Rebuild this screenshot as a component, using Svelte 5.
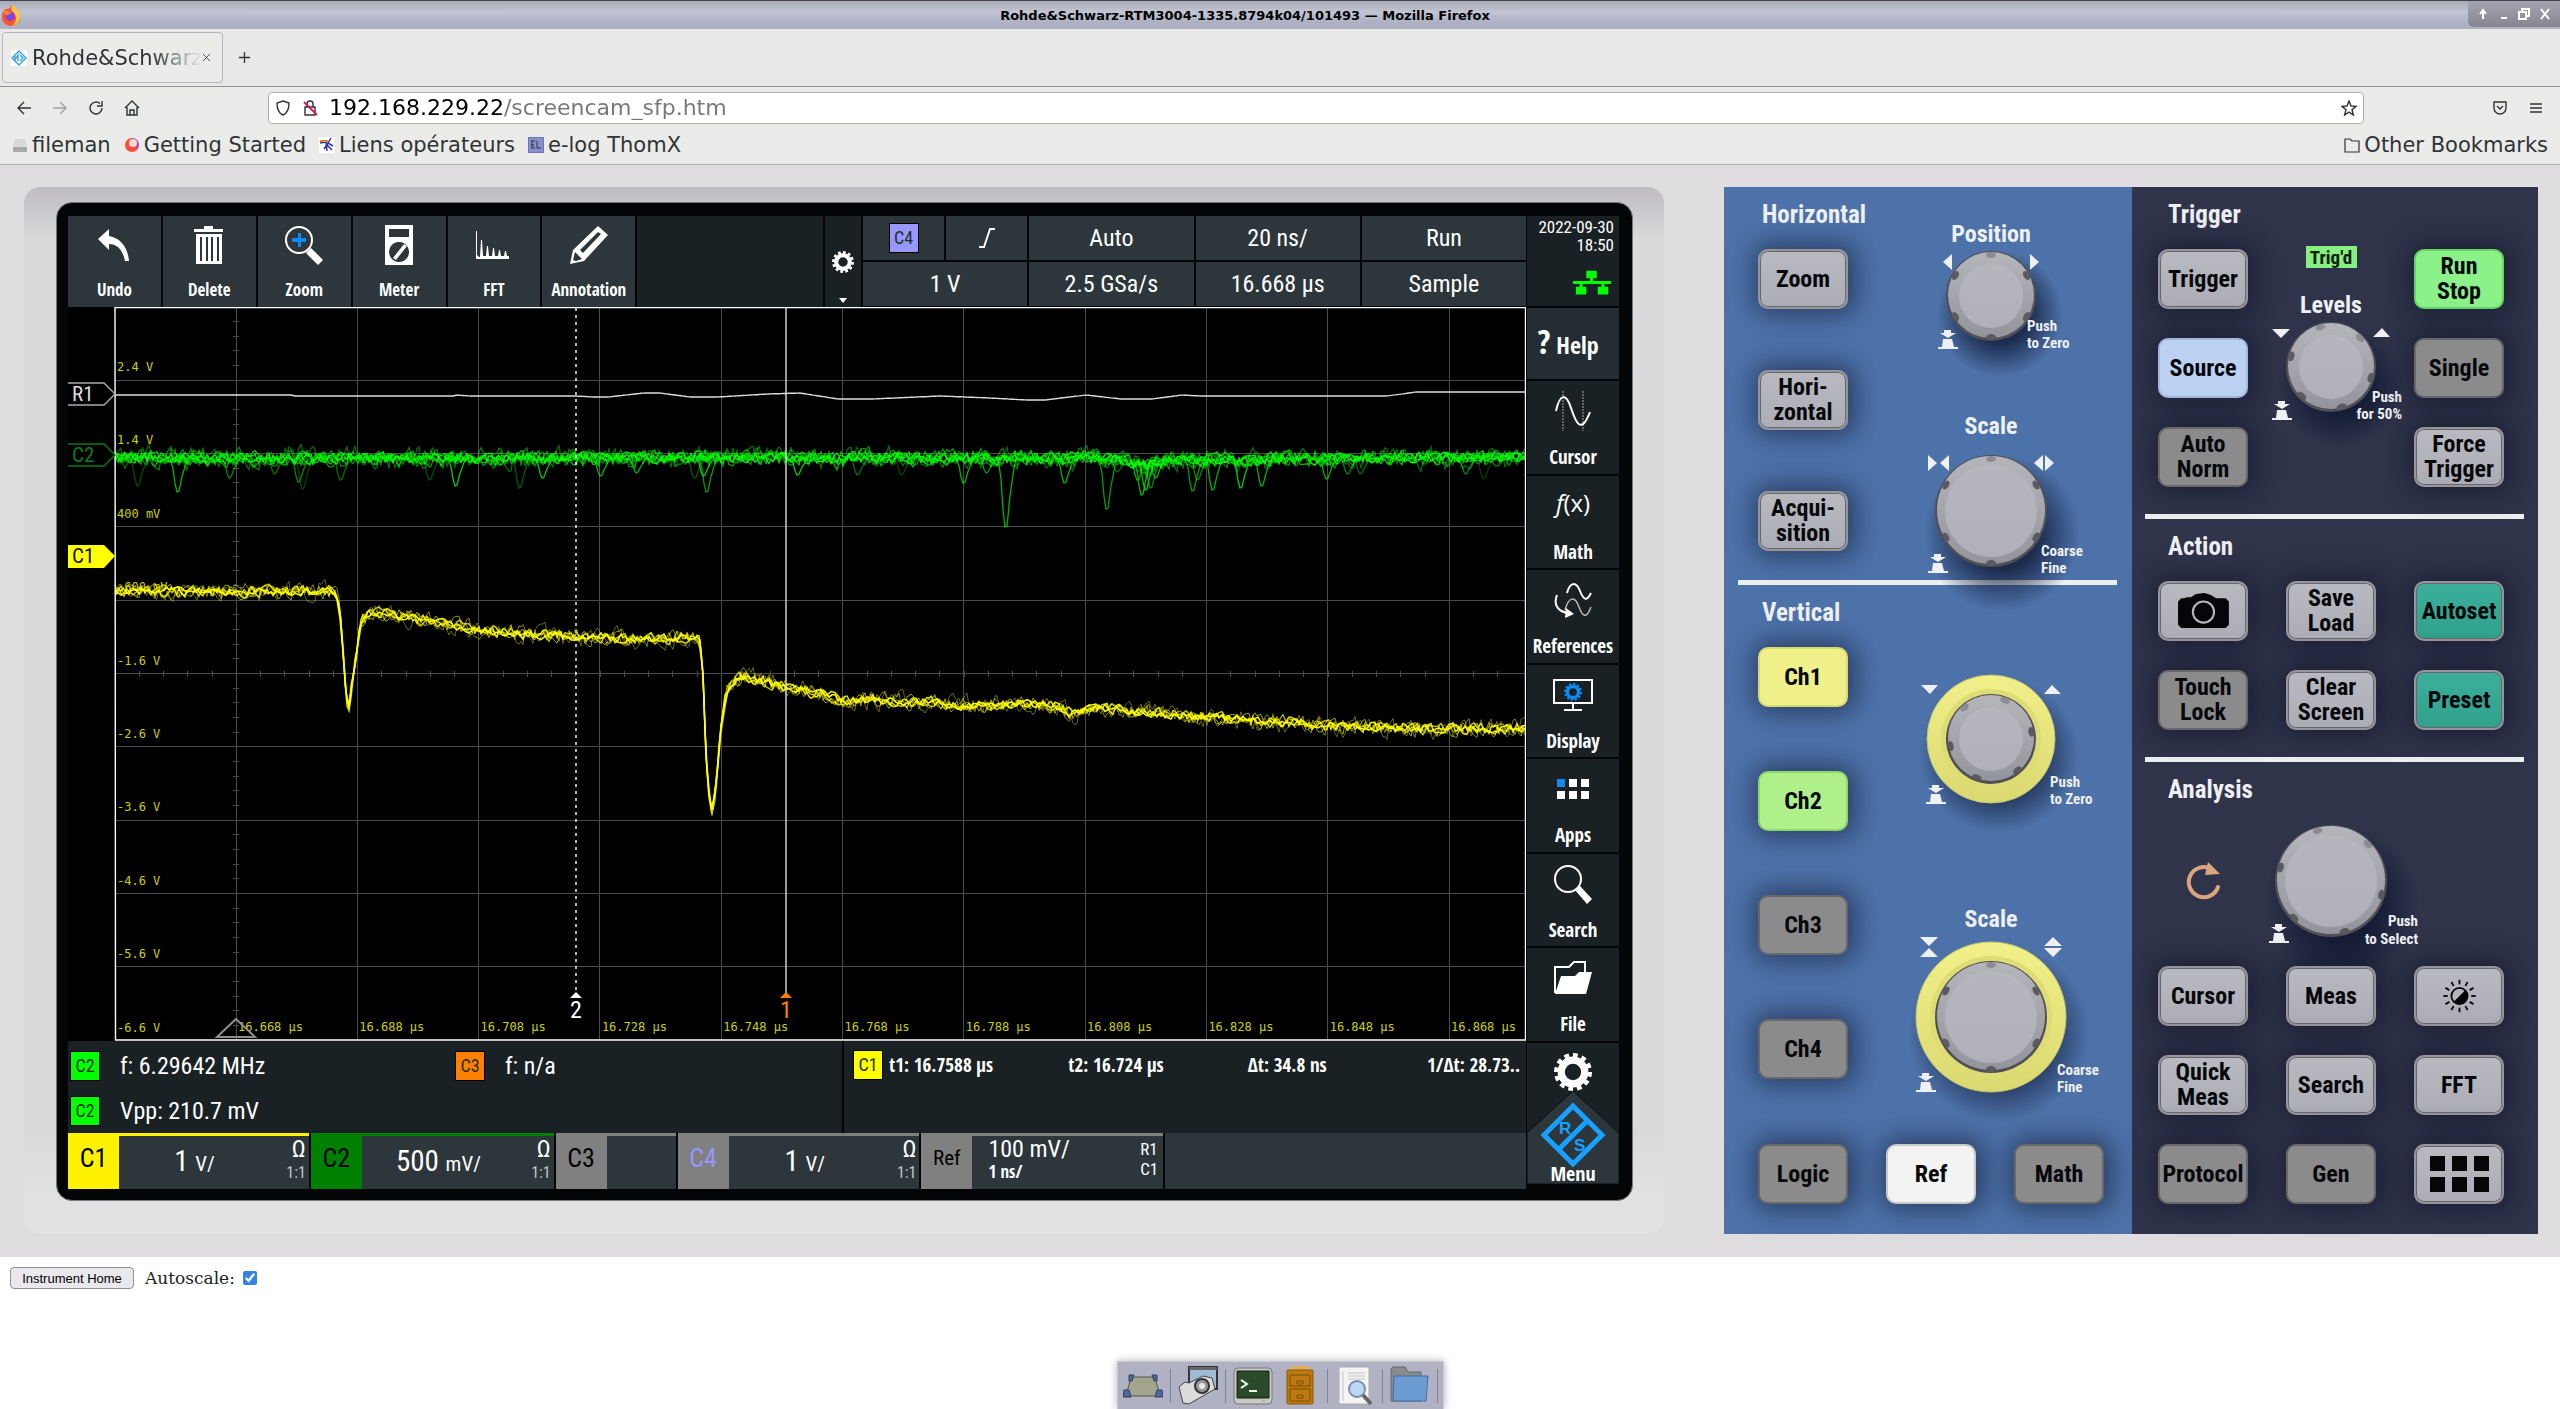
<script>
    let autoscale = true;
    let url = '192.168.229.22/screencam_sfp.htm';

    const bookmarks = [
        { name: 'fileman', icon: 'disk' },
        { name: 'Getting Started', icon: 'swirl' },
        { name: 'Liens opérateurs', icon: 'spark' },
        { name: 'e-log ThomX', icon: 'elog' }
    ];
    const tools = ['Undo', 'Delete', 'Zoom', 'Meter', 'FFT', 'Annotation'];
    const side = ['Cursor', 'Math', 'References', 'Display', 'Apps', 'Search', 'File'];
    const volts = ['2.4 V', '1.4 V', '400 mV', '-600 mV', '-1.6 V', '-2.6 V', '-3.6 V', '-4.6 V', '-5.6 V', '-6.6 V'];
    const cols = [0, 1, 2, 3, 4, 5, 6, 7, 8, 9, 10];

    // repeatable noise, so every reload draws the same waveform
    let seed = 7;
    function rnd() {
        seed = (seed * 16807) % 2147483647;
        return seed / 2147483647 - 0.5;
    }

    function at(keys, x) {
        for (let i = 1; i < keys.length; i++) {
            if (x <= keys[i][0]) {
                let [x0, y0] = keys[i - 1];
                let [x1, y1] = keys[i];
                return y0 + (y1 - y0) * (x - x0) / (x1 - x0);
            }
        }
        return keys[keys.length - 1][1];
    }

    function trace(keys, amp, step) {
        let pts = [];
        let n = 0;
        for (let x = 115; x <= 1526; x += step) {
            n = n * 0.4 + rnd() * amp;
            pts.push(x + ',' + (at(keys, x) + n).toFixed(1));
        }
        return pts.join(' ');
    }

    const c1 = [[115, 591], [335, 592], [338, 600], [341, 622], [345, 680], [348, 712], [354, 670], [360, 625], [366, 615],
        [374, 613], [400, 616], [448, 624], [484, 631], [525, 634], [576, 637], [652, 639], [693, 637], [700, 642],
        [703, 673], [706, 753], [708, 787], [712, 812], [716, 787], [721, 727], [726, 693], [731, 684], [741, 676],
        [754, 678], [785, 687], [820, 694], [842, 700], [930, 702], [963, 706], [1028, 703], [1061, 708], [1074, 716],
        [1089, 708], [1122, 710], [1204, 717], [1314, 725], [1396, 729], [1526, 728]];
    const r1 = [[115, 395], [292, 395], [294, 396], [454, 396], [456, 395], [470, 396], [576, 396], [593, 397], [608, 397],
        [644, 393], [660, 393], [690, 397], [718, 397], [768, 394], [800, 393], [838, 399], [872, 399], [940, 396],
        [990, 398], [1026, 400], [1045, 400], [1086, 395], [1121, 399], [1152, 399], [1182, 395], [1200, 396],
        [1386, 396], [1402, 394], [1416, 392], [1526, 392]];

    // [x, y of the tip, opacity]
    const dips = [[138, 486, 0.35], [178, 492, 0.8], [230, 478, 0.6], [275, 474, 0.5], [299, 482, 0.6], [303, 489, 0.3], [341, 480, 0.5],
        [430, 480, 0.35], [456, 486, 0.9], [520, 488, 0.4], [543, 478, 0.9], [601, 476, 0.8], [637, 473, 0.8], [695, 478, 0.4],
        [707, 492, 0.7], [704, 476, 0.9], [798, 475, 0.9], [858, 475, 0.5], [902, 475, 0.3], [964, 483, 0.8], [987, 473, 0.7],
        [1006, 527, 0.8], [1065, 483, 0.8], [1107, 509, 0.7], [1118, 472, 0.5], [1138, 480, 0.8], [1142, 495, 0.8], [1146, 490, 0.9], [1151, 488, 0.6],
        [1156, 478, 0.8], [1193, 491, 0.7], [1198, 480, 0.6], [1213, 490, 0.8], [1241, 488, 0.9], [1262, 486, 0.8], [1327, 479, 0.8], [1348, 474, 0.6],
        [1361, 474, 0.5], [1466, 474, 0.6], [1484, 479, 0.25]];
    const c2 = [[115, 458], [1100, 458], [1136, 463], [1144, 468], [1154, 463], [1180, 460], [1526, 457]];

    function dip(x, y) {
        let h = y - 458;
        return `M${x - 8} 459L${x - 5} ${458 + h * 0.3}L${x - 3} ${458 + h * 0.75}L${x - 1} ${y}L${x + 1} ${y - 1}L${x + 4} ${458 + h * 0.55}L${x + 8} ${458 + h * 0.15}L${x + 10} 459`;
    }

    const yellow = [trace(c1, 17, 2), trace(c1, 14, 2), trace(c1, 12, 2), trace(c1, 10, 3), trace(c1, 9, 2), trace(c1, 7, 3)];
    const green = [trace(c2, 19, 2), trace(c2, 16, 2), trace(c2, 14, 2), trace(c2, 12, 3), trace(c2, 11, 2), trace(c2, 9, 2), trace(c2, 8, 2)];
    const white = trace(r1, 0, 2);

    const channels = [
        { id: 'C1', cls: 'c1', value: '1', unit: 'V/', ohm: true },
        { id: 'C2', cls: 'c2', value: '500', unit: 'mV/', ohm: true },
        { id: 'C3', cls: 'c3' },
        { id: 'C4', cls: 'c4', value: '1', unit: 'V/', ohm: true }
    ];
</script>

{#snippet gear(cx, cy, r)}
    <circle {cx} {cy} r={r * 0.62} fill="none" stroke="currentColor" stroke-width={r * 0.38} />
    <circle {cx} {cy} r={r * 0.87} fill="none" stroke="currentColor" stroke-width={r * 0.26}
        pathLength="120" stroke-dasharray="5.4 4.6" />
{/snippet}

{#snippet face(cx, cy, r, turn)}
    <circle {cx} {cy} {r} fill="#505056" />
    <circle {cx} cy={cy - 1} r={r - 2} fill="url(#rim)" />
    {#each [0, 60, 120, 180, 240, 300] as a}
        <ellipse {cx} cy={cy - r + 4} rx="5" ry="3" transform="rotate({a + turn} {cx} {cy})" fill={a + turn < 50 || a + turn > 310 ? '#8b8b91' : '#5a5a60'} />
    {/each}
    <circle {cx} {cy} r={r > 50 ? r - 10 : r - 13} fill="url(#cap)" />
{/snippet}

{#snippet knob(cx, cy, r, turn)}
    <ellipse cx={cx + r * 0.2} cy={cy + r * 0.4} rx={r * 1.4} ry={r * 1.4} fill="url(#shade)" />
    {@render face(cx, cy, r, turn)}
{/snippet}

{#snippet ringed(cx, cy, big, r, turn)}
    <ellipse cx={cx + 8} cy={cy + 16} rx={big + 16} ry={big + 14} fill="url(#shade)" />
    <circle {cx} {cy} r={big} fill="url(#ring)" stroke="#c5c46b" />
    <circle {cx} {cy} r={r + 5} fill="#dddc75" />
    {@render face(cx, cy, r, turn)}
{/snippet}

{#snippet push(x, y)}
    <path transform="translate({x} {y})" fill="#eef0f2" d="M6 0h7v3h5L10 8 2 3h4zM5 9h9l2 8h4v2H0v-2h4z" />
{/snippet}

{#snippet key(label, tone)}
    <button class="key {tone}"><span>{label}</span></button>
{/snippet}

<div class="page">
    <header class="titlebar">
        <svg class="fox" viewBox="0 0 22 24">
            <path d="M11 2c2 2 8 5 9 10 1 7-4 11-9 11S1 19 2 12c0-3 2-5 4-6 2 0 4 0 5-4z" fill="#f9572d" />
            <path d="M12 1c0 3 8 5 8 12 0 6-4 9-8 10 5-4 6-10 0-14-1-3-1-6 0-8z" fill="#ffc83c" />
            <circle cx="10" cy="13" r="5" fill="#8a3fe0" />
            <path d="M3 9c3-2 6-1 9 1-3 0-3 3-6 2z" fill="#ff8a1f" />
        </svg>
        <h1>Rohde&amp;Schwarz-RTM3004-1335.8794k04/101493 — Mozilla Firefox</h1>
        <div class="winbtns">
            <button aria-label="Shade"><svg viewBox="0 0 12 12"><path d="M6 11V3M3 6l3-4 3 4" /></svg></button>
            <button aria-label="Minimise"><svg viewBox="0 0 12 12"><path d="M3 10h6" /></svg></button>
            <button aria-label="Restore"><svg viewBox="0 0 12 12"><path d="M4 3V1h7v7H9M1 4h7v7H1z" /></svg></button>
            <button aria-label="Close"><svg viewBox="0 0 12 12"><path d="M2 1l8 10M10 1L2 11" /></svg></button>
        </div>
    </header>

    <div class="tabs">
        <div class="tab">
            <svg class="i16" viewBox="0 0 16 16"><path fill="#fff" d="M0 0h16v16H0z" /><path d="M8 1l7 7-7 7-7-7zM4 6v4l3-5v6M9 5l3 3-3 3" fill="none" stroke="#2aa0e8" stroke-width="1.3" /></svg>
            <span>Rohde&amp;Schwarz</span>
            <button aria-label="Close tab"><svg viewBox="0 0 10 10"><path d="M1 1l8 8M9 1L1 9" fill="none" stroke="#3c4043" /></svg></button>
        </div>
        <button class="plus" aria-label="New tab"><svg viewBox="0 0 14 14"><path d="M7 1v12M1 7h12" fill="none" stroke="#2e3436" stroke-width="1.4" /></svg></button>
    </div>

    <nav class="navbar">
        <button aria-label="Back"><svg viewBox="0 0 16 16"><path d="M15 8H2M8 2L2 8l6 6" /></svg></button>
        <button class="dim" aria-label="Forward"><svg viewBox="0 0 16 16"><path d="M1 8h13M8 2l6 6-6 6" /></svg></button>
        <button aria-label="Reload"><svg viewBox="0 0 16 16"><path d="M14 8a6 6 0 1 1-2-4.500M14 1v5H9" /></svg></button>
        <button aria-label="Home"><svg viewBox="0 0 16 16"><path d="M1 8l7-7 7 7M3 7v8h10V7M6 15v-5h4v5" /></svg></button>
        <div class="urlbar">
            <svg viewBox="0 0 16 16"><path d="M8 1l6 2c0 6-1 10-6 12C3 13 2 9 2 3z" /></svg>
            <svg viewBox="0 0 16 16"><path d="M3 7h10v8H3zM5 7V4a3 3 0 0 1 6 0v3" /><path d="M2 2l13 13" stroke="#e3174b" stroke-width="1.8" /></svg>
            <input aria-label="Address" bind:value={url}>
            <svg class="star" viewBox="0 0 16 16"><path d="M8 1l2 5 5 .4-4 3.400L12.400 15 8 12.200 3.600 15 5 9.800 1 6.400 6 6z" /></svg>
        </div>
        <button class="pocket" aria-label="Pocket"><svg viewBox="0 0 16 16"><path d="M2 2h12v6a6 6 0 0 1-12 0zM5 6l3 3 3-3" /></svg></button>
        <button aria-label="Menu"><svg viewBox="0 0 16 16"><path d="M2 4h12M2 8h12M2 12h12" /></svg></button>
    </nav>

    <div class="bookmarks">
        {#each bookmarks as b}
            <a href="#{b.icon}">
                <svg class="i16" viewBox="0 0 16 16">
                    {#if b.icon === 'disk'}
                        <path d="M3 2h10l2 8H1z" fill="#d8d8d8" /><rect x="1" y="10" width="14" height="5" rx="1" fill="#a9a9a9" /><path d="M11 12h3" stroke="#6c6" />
                    {:else if b.icon === 'swirl'}
                        <circle cx="8" cy="8" r="7" fill="#fb4a3e" /><path d="M8 1a7 7 0 0 1 7 7l-3 4z" fill="#a64be8" /><circle cx="9" cy="6" r="4" fill="#f6dcc6" />
                    {:else if b.icon === 'spark'}
                        <path fill="#fff" d="M0 0h16v16H0z" /><path d="M1 6l6-1 1 9M12 1L8 8l5 5M5 12l4-6 5 3" fill="none" stroke="#2a34b8" stroke-width="1.5" /><path d="M1 4h8" stroke="#e8842c" stroke-width="2" />
                    {:else}
                        <path fill="#8890cc" stroke="#5560a8" d="M0 0h16v16H0z" /><path d="M3 4h4M3 8h3M3 11h4M4 4v7M9 4v7h4" stroke="#334" fill="none" />
                    {/if}
                </svg>{b.name}
            </a>
        {/each}
        <a class="other" href="#other"><svg class="i16" viewBox="0 0 16 16"><path d="M1 2h5l2 2h7v11H1z" fill="none" stroke="#2e3436" stroke-width="1.2" /></svg>Other Bookmarks</a>
    </div>

    <main class="stage">
        <div class="housing">
            <div class="bezel">
                <div class="left">
                    <div class="topbar">
                        <div class="tools">
                            {#each tools as t}
                                <button class="tool">
                                    <svg viewBox="0 0 40 40" fill="#fff">
                                        {#if t === 'Undo'}
                                            <path d="M4 14L15 4v7c12 2 19 12 20 25h-4c-2-10-7-17-16-17v6z" />
                                        {:else if t === 'Delete'}
                                            <path d="M5 4h10V1h9v3h10v3H5zM7 9h26v30H7zM11 12v24h2V12zM17 12v24h2V12zM22 12v24h2V12zM28 12v24h2V12z" fill-rule="evenodd" />
                                        {:else if t === 'Zoom'}
                                            <circle cx="15" cy="15" r="13" fill="none" stroke="#fff" stroke-width="2" /><path d="M8 13h6V8h3v5h5v4h-5v5h-3v-5H8z" fill="#0c8bf2" /><path d="M22 28l5-5 12 12-5 5z" />
                                        {:else if t === 'Meter'}
                                            <path d="M6 0h28v40H6zM10 4v8h20V4zM20 17a10 10 0 1 0 .1 0z" fill-rule="evenodd" /><path d="M14 33l11-14 3 2-11 14z" />
                                        {:else if t === 'FFT'}
                                            <path d="M2 34V6h1v24l2 2h1l1-17h1l1 16h3l1-10h1l1 10h3l1-8h1l1 8h3l1-6h1l1 6h3l1-5h1l1 5h2v3z" />
                                        {:else}
                                            <path d="M1 39l3-14L29 1l10 9-24 26zM6 27l-2 8 3 1 6-2zM11 25l3 3 18-19-3-2z" fill-rule="evenodd" />
                                        {/if}
                                    </svg>
                                    <span>{t}</span>
                                </button>
                            {/each}
                            <div class="blank"></div>
                        </div>
                        <button class="setup" aria-label="Setup">
                            <svg viewBox="0 0 36 90">{@render gear(18, 45, 11)}<path d="M14 81h8l-4 5z" fill="#fff" /></svg>
                        </button>
                        <div class="status">
                            <button class="half"><i class="badge c4b">C4</i></button>
                            <button class="half" aria-label="Slope"><svg viewBox="0 0 18 20"><path d="M1 19h5L12 1h5" fill="none" stroke="#fff" stroke-width="2" /></svg></button>
                            <button>Auto</button>
                            <button>20 ns/</button>
                            <button>Run</button>
                            <button>1 V</button>
                            <button>2.5 GSa/s</button>
                            <button>16.668 µs</button>
                            <button>Sample</button>
                        </div>
                    </div>

                    <svg class="plot" viewBox="68 307 1458 734">
                        <g stroke="#4b4b4b" shape-rendering="crispEdges">
                            {#each cols as c}
                                <path d="M{236 + c * 121.3} 307V1040" />
                            {/each}
                            {#each volts as v, i}
                                <path d="M115 {307 + i * 73.3}H1526" />
                            {/each}
                            {#each Array(50) as _, i}
                                <path d="M233 {307 + i * 14.66}h6" />
                            {/each}
                            {#each Array(58) as _, i}
                                <path d="M{115 + i * 24.26} 671v6" />
                            {/each}
                        </g>
                        <g class="axis">
                            {#each volts as v, i}
                                <text x="117" y={371 + i * 73.4}>{v}</text>
                            {/each}
                            {#each cols as c}
                                <text x={238 + c * 121.3} y="1031">{(16.668 + c * 0.02).toFixed(3)} µs</text>
                            {/each}
                        </g>
                        <path d="M236 1019l19 18h-38z" fill="none" stroke="#8c8c8c" stroke-width="2" />
                        <polyline points={white} fill="none" stroke="#ddd" stroke-width="1.4" />
                        {#each dips as d}
                            <path d={dip(d[0], d[1])} fill="none" stroke="#00e000" stroke-width="1.3" opacity={d[2]} />
                        {/each}
                        {#each green as g, i}
                            <polyline points={g} fill="none" stroke="#00ff00" opacity={0.45 + i * 0.09} stroke-width="1.2" />
                        {/each}
                        {#each yellow as y, i}
                            <polyline points={y} fill="none" stroke="#ffff00" opacity={0.4 + i * 0.12} stroke-width={i > 2 ? 1.5 : 1} />
                        {/each}
                        <path d="M576 308V993" stroke="#fff" stroke-dasharray="3 4" stroke-width="1.4" />
                        <path d="M786 308V993" stroke="#ddd" stroke-width="1.4" />
                        <path d="M576 992l6 6h-12z" fill="#fff" />
                        <path d="M786 992l6 6h-12z" fill="#ff8000" />
                        <text class="cur" x="576" y="1018" fill="#fff">2</text>
                        <text class="cur" x="786" y="1018" fill="#ff8000">1</text>
                        <path d="M115 307.500H1525.500V1040H115.500z" fill="none" stroke="#fff" stroke-width="1.4" />
                        <g stroke-width="1.4">
                            <path d="M68 383h36l11 11-11 11H68" fill="#000" stroke="#aaa" />
                            <path d="M68 444h36l11 11-11 11H68" fill="#000" stroke="#087a14" />
                            <path d="M68 545h36l11 11-11 12H68z" fill="#ff0" />
                        </g>
                        <g class="tags">
                            <text x="72" y="401" fill="#ddd">R1</text>
                            <text x="72" y="462" fill="#0a7d17">C2</text>
                            <text x="72" y="563" fill="#111">C1</text>
                        </g>
                    </svg>

                    <div class="measure">
                        <div class="values">
                            <div><i class="badge c2b">C2</i>f: 6.29642 MHz</div>
                            <div><i class="badge c3b">C3</i>f: n/a</div>
                            <div><i class="badge c2b">C2</i>Vpp: 210.7 mV</div>
                        </div>
                        <div class="cursors">
                            <i class="badge c1b">C1</i>
                            <span>t1: 16.7588 µs</span>
                            <span>t2: 16.724 µs</span>
                            <span>Δt: 34.8 ns</span>
                            <span>1/Δt: 28.73..</span>
                        </div>
                    </div>

                    <div class="channels">
                        {#each channels as ch}
                            <button class="ch {ch.cls}">
                                <b>{ch.id}</b>
                                <span class="val">{#if ch.value}{ch.value} <small>{ch.unit}</small>{/if}</span>
                                {#if ch.ohm}<span class="imp">Ω<small>1:1</small></span>{/if}
                            </button>
                        {/each}
                        <button class="ch ref">
                            <b>Ref</b>
                            <span class="two">100 mV/<small>1 ns/</small></span>
                            <span class="src">R1<br>C1</span>
                        </button>
                        <div class="ch empty"></div>
                    </div>
                </div>

                <div class="side">
                    <div class="date">2022-09-30<br>18:50
                        <svg viewBox="0 0 40 26" fill="#0f0"><path d="M14 0h11v8h-4v3h19v3h-7v3h4v8H26v-8h4v-3H10v3h4v8H3v-8h4v-3H0v-3h18V8h-4z" /></svg>
                    </div>
                    <button class="help"><em>?</em> Help</button>
                    {#each side as s}
                        <button class="item">
                            <svg viewBox="0 0 40 40" fill="none" stroke="#fff" stroke-width="2">
                                {#if s === 'Cursor'}
                                    <path d="M10 0v40M30 0v40" stroke-width="1" stroke-dasharray="2 1" stroke="#aaa" /><path d="M3 20C7 2 13 2 18 17S28 44 37 21" />
                                {:else if s === 'Math'}
                                    <text class="fx" x="20" y="26" text-anchor="middle" fill="#fff" stroke="none"><tspan font-style="italic">f</tspan>(x)</text>
                                {:else if s === 'References'}
                                    <path d="M14 13C17 2 23 1 27 11S34 21 38 13" /><path d="M12 30C16 16 22 16 26 27S34 38 38 27" stroke-width="1.5" stroke="#bbb" /><path d="M4 15c-4 10 1 17 12 18" /><path d="M13 28l8 6-9 4z" fill="#fff" stroke="none" />
                                {:else if s === 'Display'}
                                    <path d="M1 5h38v23H1zM20 28v6M11 35h18" /><g color="#0c8bf2">{@render gear(20, 17, 9)}</g>
                                {:else if s === 'Apps'}
                                    <g fill="#fff" stroke="none"><path fill="#0c8bf2" d="M4 10h8v8H4z" /><path d="M16 10h8v8h-8zM28 10h8v8h-8zM4 22h8v8H4zM16 22h8v8h-8zM28 22h8v8h-8z" /></g>
                                {:else if s === 'Search'}
                                    <circle cx="15" cy="15" r="13" /><path d="M22 26l5-4 12 13-5 5z" fill="#fff" stroke="none" />
                                {:else}
                                    <path d="M2 35V9h14l5-5h11v11" /><path d="M2 36l6-18h14l4-4h13l-6 22z" fill="#fff" stroke="none" />
                                {/if}
                            </svg>
                            <span>{s}</span>
                        </button>
                    {/each}
                    <button class="rs">
                        <svg viewBox="0 0 92 141">
                            {@render gear(46, 29, 19)}
                            <path d="M46 48L92 90V141H0V90z" fill="#2c363b" stroke="#0b0f10" />
                            <path d="M46 63L75 92 46 121 17 92zM62 76L30 108" fill="none" stroke="#18a0ff" stroke-width="5" />
                            <text x="32" y="91" fill="#18a0ff">R</text>
                            <text x="47" y="108" fill="#18a0ff">S</text>
                        </svg>
                        <span>Menu</span>
                    </button>
                </div>
            </div>
        </div>

        <div class="panel">
            <section class="blue">
                <div class="group">
                    <div class="keys">
                        <h2>Horizontal</h2>
                        {@render key('Zoom', 'grey')}
                        {@render key('Hori-\nzontal', 'grey')}
                        {@render key('Acqui-\nsition', 'grey')}
                    </div>
                    <svg class="dial" viewBox="0 -1 237 365">
                        <defs>
                            <radialGradient id="shade"><stop offset="0.45" stop-color="#0c1430" stop-opacity="0.75" /><stop offset="1" stop-color="#0c1430" stop-opacity="0" /></radialGradient>
                            <linearGradient id="rim" x1="0" y1="0" x2="0" y2="1"><stop offset="0" stop-color="#b5b6bb" /><stop offset="1" stop-color="#94949c" /></linearGradient>
                            <linearGradient id="cap" x1="0" y1="0" x2="0" y2="1"><stop offset="0" stop-color="#b6b7bd" /><stop offset="1" stop-color="#b0b0ba" /></linearGradient>
                            <linearGradient id="ring" x1="0" y1="0" x2="0" y2="1"><stop offset="0" stop-color="#f1f08a" /><stop offset="1" stop-color="#dad971" /></linearGradient>
                        </defs>
                        {@render knob(111, 108, 45, 0)}
                        {@render knob(111, 323, 56, 0)}
                        <path d="M63 74l9-8v16zM159 74l-9-8v16zM48 267l9 8-9 8zM69 267l-9 8 9 8zM163 267v16l-9-8zM165 267v16l9-8z" fill="#eef0f2" />
                        {@render push(58, 142)}
                        {@render push(48, 366)}
                        <text class="name" x="111" y="54">Position</text>
                        <text class="name" x="111" y="246">Scale</text>
                        <text class="hint" x="147" y="143">Push<tspan x="147" y="160">to Zero</tspan></text>
                        <text class="hint" x="161" y="368">Coarse<tspan x="161" y="385">Fine</tspan></text>
                    </svg>
                </div>
                <hr>
                <div class="group">
                    <div class="keys wide">
                        <h2>Vertical</h2>
                        {@render key('Ch1', 'yellow')}
                        {@render key('Ch2', 'lime')}
                        {@render key('Ch3', 'dark')}
                        {@render key('Ch4', 'dark')}
                    </div>
                    <svg class="dial" viewBox="0 0 237 494">
                        {@render ringed(111, 154, 64, 45, 20)}
                        {@render ringed(111, 432, 75, 56, 0)}
                        <path d="M41 100h17l-8 9zM164 109h17l-9-9zM40 352h18l-9 9zM40 372h18l-9-9zM164 361h18l-9-9zM164 363h18l-9 9z" fill="#eef0f2" />
                        {@render push(46, 200)}
                        {@render push(36, 488)}
                        <text class="name" x="111" y="342">Scale</text>
                        <text class="hint" x="170" y="202">Push<tspan x="170" y="219">to Zero</tspan></text>
                        <text class="hint" x="177" y="490">Coarse<tspan x="177" y="507">Fine</tspan></text>
                    </svg>
                </div>
                <div class="pad last">
                    {@render key('Logic', 'dark')}
                    {@render key('Ref', 'white')}
                    {@render key('Math', 'dark')}
                </div>
            </section>

            <section class="navy">
                <h2>Trigger</h2>
                <div class="pad">
                    {@render key('Trigger', 'grey')}
                    <svg class="dial mid" viewBox="0 0 90 238">
                        {@render knob(45, 118, 45, -15)}
                        <path d="M20-3h51v22H20z" fill="#87ee80" />
                        <text class="trigd" x="45" y="15">Trig'd</text>
                        <text class="name" x="45" y="64">Levels</text>
                        <path d="M-14 80H4l-9 9zM87 88h17l-8-9z" fill="#eef0f2" />
                        {@render push(-14, 152)}
                        <text class="hint end" x="116" y="153">Push<tspan x="116" y="170">for 50%</tspan></text>
                    </svg>
                    {@render key('Run\nStop', 'run')}
                    {@render key('Source', 'sky')}
                    {@render key('Single', 'dark')}
                    {@render key('Auto\nNorm', 'dark')}
                    {@render key('Force\nTrigger', 'grey')}
                </div>
                <hr>
                <h2>Action</h2>
                <div class="pad">
                    <button class="key grey" aria-label="Screenshot">
                        <svg viewBox="0 0 50 34"><path d="M4 5h3l2-1h4l5-3 8-1 6 2 5 3h9l3 3v22l-3 3H4l-3-3V8z" fill="#050608" /><circle cx="25" cy="18" r="10" fill="none" stroke="#b5b5bd" stroke-width="2" /></svg>
                    </button>
                    {@render key('Save\nLoad', 'grey')}
                    {@render key('Autoset', 'teal')}
                    {@render key('Touch\nLock', 'dark')}
                    {@render key('Clear\nScreen', 'grey')}
                    {@render key('Preset', 'teal')}
                </div>
                <hr>
                <h2>Analysis</h2>
                <svg class="dial turn" viewBox="0 2 346 162">
                    {@render knob(173, 79, 56, -15)}
                    <path d="M53 67A15 15 0 1 0 60 85" fill="none" stroke="#dba67c" stroke-width="4" stroke-linecap="round" />
                    <path d="M50 60l12 12-15 1z" fill="#dba67c" />
                    {@render push(111, 122)}
                    <text class="hint end" x="260" y="124">Push<tspan x="260" y="142">to Select</tspan></text>
                </svg>
                <div class="pad">
                    {@render key('Cursor', 'grey')}
                    {@render key('Meas', 'grey')}
                    <button class="key grey" aria-label="Intensity">
                        <svg viewBox="0 0 50 40">
                            <circle cx="25" cy="20" r="9" fill="#b5b5bd" stroke="#050608" stroke-width="2" /><path d="M18 27L32 13A10 10 0 0 1 18 27z" fill="#050608" />
                            {#each Array(12) as _, i}<path d="M25 2v5" transform="rotate({i * 30} 25 20)" stroke="#050608" stroke-width="2" />{/each}
                        </svg>
                    </button>
                    {@render key('Quick\nMeas', 'grey')}
                    {@render key('Search', 'grey')}
                    {@render key('FFT', 'grey')}
                    {@render key('Protocol', 'dark')}
                    {@render key('Gen', 'dark')}
                    <button class="key grey" aria-label="Apps">
                        <svg viewBox="0 0 60 36"><path d="M1 0h15v15H1zM23 0h15v15H23zM45 0h15v15H45zM1 21h15v15H1zM23 21h15v15H23zM45 21h15v15H45z" fill="#050608" /></svg>
                    </button>
                </div>
            </section>
        </div>
    </main>

    <div class="controls">
        <button>Instrument Home</button>
        <label>Autoscale: <input type="checkbox" bind:checked={autoscale}></label>
    </div>

    <footer class="dock">
        <button aria-label="Show desktop"><svg viewBox="0 0 40 40"><path d="M8 11h24l5 19H3z" fill="#a3a48d" stroke="#55564a" /><path d="M6 9h5l-2 6H6zM29 9h5v6h-3zM1 24h5l2 7H0zM34 24h5l1 7h-8z" fill="#4d689b" stroke="#2f4168" /></svg></button>
        <i></i>
        <button aria-label="Screenshot"><svg viewBox="0 0 40 40"><path d="M11 1h28v22H11z" fill="#9dbad8" stroke="#333" stroke-width="2" /><path d="M11 1h28v3H11z" fill="#666" /><path d="M1 21l6-5 4 1 14-7 9 2 3 11-26 15-6-1z" fill="#dcdcdc" stroke="#444" /><circle cx="24" cy="20" r="7" fill="#999" stroke="#333" stroke-width="2" /><circle cx="24" cy="20" r="3" fill="#e8e8e8" /></svg></button>
        <i></i>
        <button aria-label="Terminal"><svg viewBox="0 0 40 40"><rect x="1" y="2" width="38" height="36" rx="4" fill="#c9cac4" stroke="#777" /><path d="M4 5h32v27H4z" fill="#2c4a2a" stroke="#122010" /><path d="M8 14l6 4-6 4M16 25h8" fill="none" stroke="#e9ffe6" stroke-width="2" /><path d="M29 35h3" stroke="#6c3" /></svg></button>
        <button aria-label="Files"><svg viewBox="0 0 40 40"><path d="M9 3l3-3h16l3 3z" fill="#e4ad52" /><rect x="7" y="4" width="26" height="34" rx="1" fill="#bd7a10" stroke="#8b5706" /><path d="M10 9h20v11H10zM10 23h20v12H10zM17 15h6v3h-6zM17 29h6v3h-6z" fill="none" stroke="#7c4c04" /></svg></button>
        <i></i>
        <button aria-label="Find files"><svg viewBox="0 0 40 40"><path d="M4 1h30v37H4z" fill="#f4f4f2" stroke="#aaa" /><path d="M13 7h17M13 10h17M13 13h17M8 5v30" stroke="#c4c4c4" /><circle cx="22" cy="23" r="8" fill="#bcd7f2" stroke="#7a8ea8" stroke-width="2" /><path d="M28 29l8 9" stroke="#666" stroke-width="4" /></svg></button>
        <i></i>
        <button aria-label="Folder"><svg viewBox="0 0 40 40"><path d="M1 3l2-2h12l3 5h13v29H1z" fill="#8a8b8e" stroke="#666" /><path d="M4 10h34l-2 25H3z" fill="#6d9cd3" stroke="#3d6ba8" /></svg></button>
        <i></i>
    </footer>
</div>

<style>
    :global(body) {
        background: #fff;
        font-family: "DejaVu Sans", sans-serif;
    }

    .page {
        min-height: 100vh;
        display: flex;
        flex-direction: column;
    }

    button {
        border: 0;
        padding: 0;
        background: none;
        font: inherit;
        color: inherit;
    }

    h1, h2 {
        margin: 0;
    }

    svg {
        display: block;
    }

    .titlebar {
        box-sizing: border-box;
        height: 29px;
        display: flex;
        align-items: center;
        border-top: 1px solid #44444c;
        background: linear-gradient(#a9aab6, #c2c5d3 40%, #aeb0c4 75%);
    }

    .fox {
        width: 22px;
        height: 24px;
    }

    .titlebar h1 {
        flex: 1;
        text-align: center;
        font-size: 13px;
        color: #000;
    }

    .winbtns {
        align-self: flex-start;
        display: flex;
        width: 92px;
        height: 26px;
        align-items: center;
        justify-content: space-evenly;
        background: linear-gradient(#a4a5b0, #85868f);
        border-bottom-left-radius: 6px;
    }

    .winbtns svg {
        width: 12px;
        height: 12px;
        fill: none;
        stroke: #fff;
        stroke-width: 2;
    }

    .i16 {
        width: 16px;
        height: 16px;
        flex: none;
    }

    .tabs {
        box-sizing: border-box;
        height: 58px;
        display: flex;
        align-items: center;
        background: #e8e8e6;
        border-bottom: 1px solid #949494;
    }

    .tab {
        box-sizing: border-box;
        width: 221px;
        height: 51px;
        margin-left: 2px;
        padding: 0 10px 0 8px;
        display: flex;
        align-items: center;
        border: 1px solid #b4b5c0;
        border-radius: 4px;
        background: #ebebe9;
        font-size: 21px;
        color: #2e3436;
    }

    .tab span {
        flex: none;
        margin-left: 5px;
        mask-image: linear-gradient(90deg, #000 70%, transparent);
    }

    .tab button svg {
        width: 9px;
        height: 9px;
    }

    .plus {
        margin-left: 15px;
    }

    .plus svg {
        width: 13px;
        height: 13px;
    }

    .navbar {
        height: 41px;
        padding: 0 16px;
        display: flex;
        align-items: center;
        gap: 20px;
        background: #ebebe9;
    }

    .navbar svg {
        width: 16px;
        height: 16px;
        fill: none;
        stroke: #2e3436;
        stroke-width: 1.4;
    }

    .navbar .dim {
        opacity: .4;
    }

    .urlbar {
        box-sizing: border-box;
        flex: 1;
        height: 32px;
        margin-left: 108px;
        margin-right: 108px;
        padding: 0 6px;
        display: flex;
        align-items: center;
        gap: 11px;
        border: 1px solid #b0b0b0;
        border-radius: 4px;
        background: #fff;
    }

    .urlbar input {
        flex: 1;
        padding: 0;
        border: 0;
        font: 22px "DejaVu Sans", sans-serif;
        color: transparent;
        background: linear-gradient(90deg, #000 174px, #777 174px);
        background-clip: text;
        outline: none;
    }

    .bookmarks {
        box-sizing: border-box;
        height: 37px;
        padding: 0 12px 2px;
        display: flex;
        align-items: center;
        gap: 13px;
        background: #ebebe9;
        border-bottom: 1px solid #b0b0b0;
        font-size: 21px;
    }

    .bookmarks a {
        display: flex;
        align-items: center;
        gap: 4px;
        color: #2e3436;
        text-decoration: none;
    }

    .bookmarks .other {
        margin-left: auto;
    }

    .stage {
        padding: 22px 22px 23px 24px;
        display: flex;
        align-items: flex-start;
        gap: 60px;
        background: #dfdde0;
    }

    .housing {
        flex: 1;
        padding: 15px 31px 33px 32px;
        border-radius: 16px;
        background: linear-gradient(#bfbdc1, #c8c7cb 2%, #dadadd 5%, #dadadd 90%, #e2e2e4 97%);
    }

    .bezel {
        padding: 13px 13px 16px 11px;
        display: flex;
        gap: 1px;
        border: 1px solid #77777b;
        border-radius: 16px;
        background: #030506;
        color: #fff;
        font-family: "Roboto Condensed", "Liberation Sans Narrow", sans-serif;
    }

    .left {
        flex: 1;
        min-width: 0;
    }

    .topbar {
        height: 91px;
        display: grid;
        grid-template-columns: 755fr 36px 663fr;
        gap: 2px;
    }

    .tools {
        display: grid;
        grid-template-columns: repeat(6, 1fr) 2fr;
        gap: 2px;
    }

    .tool, .cursors, .help, .item, .rs, .two small {
        font-family: "Open Sans Condensed", "Roboto Condensed", sans-serif;
        font-weight: 700;
    }

    .tool {
        padding-top: 9px;
        display: flex;
        flex-direction: column;
        align-items: center;
        gap: 15px;
        background: #2c363b;
        font-size: 17px;
        line-height: 20px;
    }

    .tool svg {
        width: 40px;
        height: 40px;
    }

    .blank, .setup {
        background: #1a2124;
    }

    .setup svg {
        width: 36px;
        height: 90px;
    }

    .status {
        display: grid;
        grid-template-columns: repeat(8, 1fr);
        grid-template-rows: 1fr 1fr;
        gap: 2px;
        padding-bottom: 1px;
    }

    .status button {
        grid-column: span 2;
        display: flex;
        align-items: center;
        justify-content: center;
        background: #2c363b;
        font-size: 24px;
    }

    .status .half {
        grid-column: span 1;
    }

    .status svg {
        width: 18px;
        height: 20px;
    }

    .badge {
        box-sizing: border-box;
        width: 30px;
        height: 30px;
        flex: none;
        border: 1px solid #000;
        font-family: "Roboto Condensed", sans-serif;
        font-size: 18px;
        font-style: normal;
        font-weight: 400;
        line-height: 28px;
        text-align: center;
        color: #173017;
    }

    .c1b { background: #ff0; }
    .c2b { background: #0f0; }
    .c3b { background: #ff8000; }
    .c4b { background: #9797ff; }

    .plot {
        width: 100%;
        height: auto;
        background: #000;
    }

    .axis {
        font: 12px "DejaVu Sans Mono", monospace;
        fill: #cfcf00;
    }

    .cur {
        font-size: 24px;
        text-anchor: middle;
    }

    .tags {
        font-size: 21px;
    }

    .measure {
        height: 92px;
        display: grid;
        grid-template-columns: 774fr 682fr;
        gap: 2px;
    }

    .values {
        padding: 2px 2px 0;
        display: grid;
        grid-template-columns: 1fr 1fr;
        align-items: center;
        background: #1a2124;
        font-size: 24px;
    }

    .values div {
        display: flex;
        align-items: center;
        gap: 20px;
    }

    .cursors {
        padding: 9px 0 0 9px;
        display: grid;
        grid-template-columns: 30px 1fr 1fr 1fr 99px;
        align-items: center;
        align-content: start;
        column-gap: 6px;
        background: #1a2124;
        font-size: 19px;
        white-space: nowrap;
    }

    .channels {
        height: 51px;
        display: grid;
        grid-template-columns: 241fr 243fr 120fr 242fr 242fr 361fr;
        gap: 2px;
    }

    .ch {
        min-width: 0;
        display: flex;
        align-items: stretch;
        border-top: 3px solid var(--tone);
        background: #2c363b;
        text-align: left;
    }

    .ch b {
        width: 51px;
        flex: none;
        background: var(--tone);
        color: #000;
        font-size: 26px;
        font-weight: 400;
        line-height: 45px;
        text-align: center;
    }

    .ch.c1 { --tone: #fff200; }
    .ch.c2 { --tone: #008000; }
    .ch.c3, .ch.c4, .ch.ref { --tone: #808080; }
    .ch.empty { --tone: #2c363b; }

    .ch.c4 b {
        color: #9797ff;
    }

    .ch.ref b {
        font-size: 21px;
    }

    .val {
        flex: 1;
        padding-right: 16px;
        text-align: center;
        font-size: 29px;
        line-height: 50px;
    }

    .val small {
        font-size: 21px;
    }

    .imp, .src, .two {
        display: flex;
        flex-direction: column;
    }

    .imp {
        padding-right: 3px;
        align-items: flex-end;
        font-size: 24px;
        line-height: 26px;
    }

    .imp small {
        font-size: 16px;
        line-height: 22px;
        color: #c4c8ca;
    }

    .two {
        flex: 1;
        padding-left: 16px;
        font-size: 24px;
        line-height: 26px;
    }

    .two small {
        font-size: 17px;
        line-height: 20px;
    }

    .src {
        display: block;
        padding-right: 5px;
        font-size: 17px;
        line-height: 20px;
        padding-top: 3px;
    }

    .side {
        width: 92px;
        display: flex;
        flex-direction: column;
        gap: 2px;
    }

    .date {
        box-sizing: border-box;
        height: 90px;
        padding: 2px 5px 0 0;
        background: #1a2124;
        font-size: 17px;
        line-height: 18px;
        text-align: right;
    }

    .date svg {
        width: 38px;
        height: 26px;
        margin: 16px 3px 0 auto;
    }

    .help {
        height: 71px;
        padding: 0 10px 6px 0;
        background: #242d33;
        font-size: 24px;
    }

    .help em {
        font-size: 34px;
        font-style: normal;
    }

    .item {
        flex: 1;
        display: flex;
        flex-direction: column;
        align-items: center;
        padding-top: 10px;
        gap: 16px;
        background: #1a2124;
        font-size: 19px;
        line-height: 20px;
    }

    .item svg {
        width: 40px;
        height: 40px;
    }

    .fx {
        font: 24px "Open Sans", sans-serif;
    }

    .rs {
        height: 141px;
        display: grid;
        background: #1a2124;
        font-size: 20px;
        line-height: 20px;
    }

    .rs svg, .rs span {
        grid-area: 1 / 1;
    }

    .rs svg {
        width: 92px;
        height: 141px;
    }

    .rs span {
        align-self: end;
    }

    .rs text {
        font: bold 17px "Liberation Sans", sans-serif;
    }

    .panel {
        display: flex;
        font-family: "Roboto Condensed", "Liberation Sans Narrow", "Liberation Sans", sans-serif;
    }

    .panel h2 {
        margin: 0 0 20px 4px;
        font-size: 25px;
        line-height: 28px;
        color: #eef0f2;
    }

    .blue {
        width: 374px;
        padding: 14px 0 30px 34px;
        background: #4d72a9;
    }

    .navy {
        width: 380px;
        padding: 14px 0 30px 26px;
        background: #2f344b;
    }

    .navy h2 {
        margin-left: 10px;
    }

    .panel hr {
        width: 379px;
        height: 5px;
        margin: 28px 0 14px -20px;
        border: 0;
        background: #eceef0;
    }

    .navy hr {
        margin: 27px 0 14px -13px;
    }

    .group {
        display: flex;
        gap: 32px;
    }

    .keys {
        width: 90px;
        display: flex;
        flex-direction: column;
        gap: 61px;
    }

    .keys h2 {
        margin-bottom: -41px;
    }

    .keys.wide {
        gap: 64px;
    }

    .keys.wide h2 {
        margin-bottom: -44px;
    }

    .dial {
        width: 237px;
        flex: none;
        align-self: stretch;
        margin-top: -14px;
        overflow: visible;
        pointer-events: none;
    }

    .dial.mid {
        width: 90px;
        height: 238px;
        margin: 0;
        grid-row: 1 / 4;
        grid-column: 2;
    }

    .dial.turn {
        width: 346px;
        height: 162px;
        margin-top: -20px;
    }

    .name {
        font-size: 24px;
        font-weight: 700;
        text-anchor: middle;
        fill: #eef0f2;
    }

    .hint {
        font-size: 15px;
        font-weight: 700;
        fill: #eef0f2;
    }

    .end {
        text-anchor: end;
    }

    .trigd {
        font-size: 19px;
        font-weight: 700;
        text-anchor: middle;
        fill: #06210a;
    }

    .pad {
        display: grid;
        grid-template-columns: repeat(3, 90px);
        gap: 29px 38px;
    }

    .last {
        margin-top: 65px;
    }

    .key {
        position: relative;
        box-sizing: border-box;
        width: 90px;
        height: 60px;
        display: flex;
        align-items: center;
        justify-content: center;
        border: 2px solid #96969a;
        border-radius: 10px;
        background: linear-gradient(#b9bac0, #acacb6);
        box-shadow: inset 0 0 0 1px #66666b, 2px 0 26px 6px rgba(8, 12, 36, .5);
        color: #06080b;
        font-size: 24px;
        font-weight: 700;
        line-height: 25px;
        text-align: center;
        white-space: pre-line;
    }

    .key svg {
        height: 36px;
    }

    .key.dark {
        border-color: #68686a;
        background: #8b8b8b;
        box-shadow: 2px 0 26px 6px rgba(8, 12, 36, .5);
    }

    .key.teal {
        background: linear-gradient(#3cb09c, #2fa08c);
    }

    .key.yellow {
        border-color: #dad96c;
        background: #f0f08a;
    }

    .key.lime {
        border-color: #90d566;
        background: #aff08a;
    }

    .key.run {
        border-color: #6bd365;
        background: #8af289;
    }

    .key.sky {
        border-color: #9fb8dc;
        background: #bcd2f2;
    }

    .key.white {
        border-color: #c9c9cb;
        background: #f3f3f3;
    }

    .key.yellow, .key.lime, .key.run, .key.sky, .key.white {
        box-shadow: 2px 0 26px 6px rgba(8, 12, 36, .5);
    }

    .controls {
        padding: 10px;
        display: flex;
        align-items: center;
        gap: 11px;
        font: 17px "DejaVu Serif", serif;
        line-height: 20px;
        color: #222;
    }

    .controls button {
        width: 124px;
        height: 22px;
        border: 1px solid #8f8f9d;
        border-radius: 4px;
        background: #e9e9ed;
        font: 13px "Liberation Sans", sans-serif;
        color: #000;
    }

    .controls label {
        display: flex;
        align-items: center;
        gap: 8px;
    }

    .controls input {
        width: 14px;
        height: 14px;
        margin: 0;
        accent-color: #3584e4;
    }

    .dock {
        box-sizing: border-box;
        height: 48px;
        margin: auto auto 0;
        padding: 0 5px;
        display: flex;
        align-items: center;
        gap: 7px;
        background: #b0b2c4;
        border: 1px solid #c9cad6;
        border-bottom: 0;
        box-shadow: 0 0 8px rgba(0, 0, 0, .3);
    }

    .dock svg {
        width: 40px;
        height: 40px;
    }

    .dock i {
        width: 1px;
        height: 34px;
        background: #83849a;
    }
</style>
